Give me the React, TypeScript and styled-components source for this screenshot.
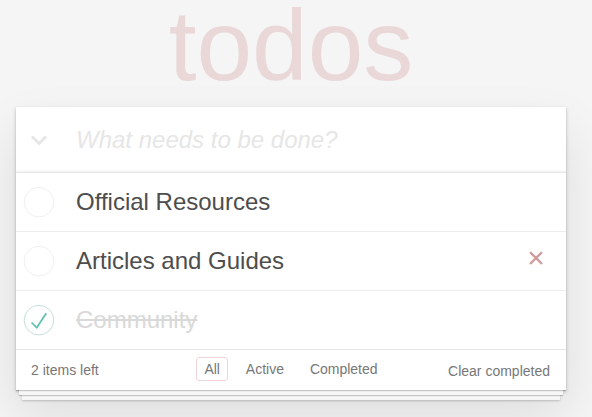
import React from "react";
import styled, { createGlobalStyle } from "styled-components";

const GlobalStyle = createGlobalStyle`
  html, body { margin: 0; padding: 0; }
  body {
    background: #f5f5f5;
    font: 14px "Liberation Sans", Arial, sans-serif;
    line-height: 1.4em;
    color: #4d4d4d;
  }
`;

const Page = styled.div`
  width: 550px;
  padding: 0 26px 40px 16px;
`;

const Title = styled.h1`
  margin: 0 0 17px;
  height: 90px;
  font-size: 100px;
  line-height: 90px;
  font-weight: 100;
  text-align: center;
  color: rgba(175, 47, 47, 0.15);
`;

const Card = styled.section`
  background: #fff;
  box-shadow: 0 1px 1px rgba(0, 0, 0, 0.2), 0 8px 0 -3px #f6f6f6,
    0 9px 1px -3px rgba(0, 0, 0, 0.2), 0 16px 0 -6px #f6f6f6,
    0 17px 2px -6px rgba(0, 0, 0, 0.2), 0 2px 4px 0 rgba(0, 0, 0, 0.2),
    0 25px 50px 0 rgba(0, 0, 0, 0.1);
`;

const NewTodoRow = styled.header`
  display: flex;
  align-items: center;
  height: 65px;
  border-bottom: 1px solid #e6e6e6;
  box-shadow: inset 0 -2px 1px rgba(0, 0, 0, 0.03);
`;

const ToggleAll = styled.span`
  width: 60px;
  box-sizing: border-box;
  padding: 1px 0 0 14px;
  display: flex;
  align-items: center;
  flex-shrink: 0;
`;

const NewTodoInput = styled.input`
  flex: 1;
  min-width: 0;
  box-sizing: border-box;
  height: 65px;
  padding: 16px 16px 16px 0;
  border: 0;
  outline: none;
  background: transparent;
  font-family: "Liberation Sans", Arial, sans-serif;
  font-size: 24px;
  line-height: 33px;
  color: #4d4d4d;
  &::placeholder {
    font-style: italic;
    font-weight: 300;
    color: #e6e6e6;
  }
`;

const List = styled.ul`
  margin: 0;
  padding: 0;
  list-style: none;
`;

const Item = styled.li`
  display: flex;
  align-items: center;
  height: 58px;
  border-bottom: 1px solid #ededed;
  &:last-child {
    border-bottom: none;
  }
`;

const ToggleBox = styled.span`
  width: 40px;
  height: 40px;
  flex-shrink: 0;
  display: block;
  svg {
    display: block;
  }
`;

const Label = styled.label<{ $done?: boolean }>`
  flex: 1;
  padding: 15px 15px 15px 20px;
  font-size: 24px;
  line-height: 28px;
  color: ${(p) => (p.$done ? "#d9d9d9" : "#4d4d4d")};
  text-decoration: ${(p) => (p.$done ? "line-through" : "none")};
  white-space: nowrap;
`;

const Destroy = styled.button<{ $visible?: boolean }>`
  width: 40px;
  height: 40px;
  margin-right: 10px;
  padding: 0 0 6px;
  border: 0;
  background: none;
  font-family: "Liberation Sans", Arial, sans-serif;
  font-size: 30px;
  line-height: 34px;
  color: #cc9a9a;
  visibility: ${(p) => (p.$visible ? "visible" : "hidden")};
  flex-shrink: 0;
`;

const Footer = styled.footer`
  display: grid;
  grid-template-columns: 1fr auto 1fr;
  height: 20px;
  padding: 10px 15px;
  border-top: 1px solid #e6e6e6;
  color: #777;
  line-height: 20px;
`;

const Count = styled.span`
  justify-self: start;
  strong {
    font-weight: normal;
  }
`;

const Filters = styled.ul`
  display: flex;
  gap: 3.9px;
  margin: -3px 0 0;
  padding: 0;
  list-style: none;
  align-self: start;
`;

const FilterLink = styled.a<{ $selected?: boolean }>`
  display: block;
  margin: 0 3px;
  padding: 3px 7px;
  border: 1px solid
    ${(p) => (p.$selected ? "rgba(175, 47, 47, 0.2)" : "transparent")};
  border-radius: 3px;
  line-height: 16px;
  color: inherit;
  text-decoration: none;
`;

const Clear = styled.button`
  justify-self: end;
  margin-right: 1px;
  padding: 0;
  border: 0;
  background: none;
  font: inherit;
  line-height: 20px;
  color: inherit;
`;

const Chevron = () => (
  <svg width="18" height="11" viewBox="0 0 18 11">
    <path
      d="M2 1.5 L9 8.5 L16 1.5"
      fill="none"
      stroke="#e6e6e6"
      strokeWidth="3"
    />
  </svg>
);

const ToggleIcon = ({ done }: { done?: boolean }) => (
  <svg width="40" height="40" viewBox="-10 -18 100 135">
    <circle
      cx="50"
      cy="50"
      r="50"
      fill="none"
      stroke={done ? "#bddad5" : "#ededed"}
      strokeWidth="3"
    />
    {done && <path fill="#5dc2af" d="M72 25L42 71 27 56l-4 4 20 20 34-52z" />}
  </svg>
);

const todos = [
  { title: "Official Resources", done: false, hover: false },
  { title: "Articles and Guides", done: false, hover: true },
  { title: "Community", done: true, hover: false },
];

export default function App() {
  return (
    <>
      <GlobalStyle />
      <Page>
        <Title>todos</Title>
        <Card>
          <NewTodoRow>
            <ToggleAll>
              <Chevron />
            </ToggleAll>
            <NewTodoInput placeholder="What needs to be done?" />
          </NewTodoRow>
          <List>
            {todos.map((t) => (
              <Item key={t.title}>
                <ToggleBox>
                  <ToggleIcon done={t.done} />
                </ToggleBox>
                <Label $done={t.done}>{t.title}</Label>
                <Destroy $visible={t.hover}>×</Destroy>
              </Item>
            ))}
          </List>
          <Footer>
            <Count>
              <strong>2</strong> items left
            </Count>
            <Filters>
              <li>
                <FilterLink href="#/" $selected>
                  All
                </FilterLink>
              </li>
              <li>
                <FilterLink href="#/active">Active</FilterLink>
              </li>
              <li>
                <FilterLink href="#/completed">Completed</FilterLink>
              </li>
            </Filters>
            <Clear>Clear completed</Clear>
          </Footer>
        </Card>
      </Page>
    </>
  );
}
